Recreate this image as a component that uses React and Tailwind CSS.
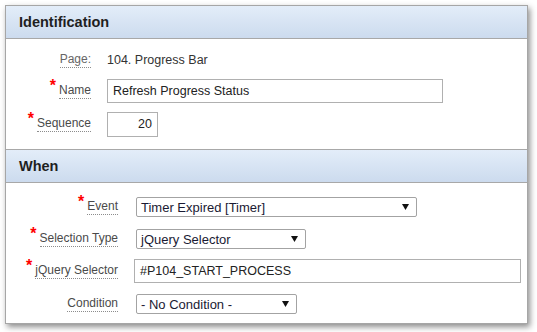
import React from "react";

const font = { fontFamily: '"Liberation Sans", Arial, sans-serif' };

function Req() {
  return (
    <span className="relative top-[-5px] mr-[3px] text-[16px] font-bold leading-none text-[#ff0000]">*</span>
  );
}

function Label({ children, req, light }) {
  return (
    <div className="flex items-center justify-end">
      {req && <Req />}
      <span
        className={
          "border-b border-dotted border-[#8c8c8c] pb-[1px] text-[12px] leading-[14px] " +
          (light ? "text-[#666666]" : "text-[#4a4a4a]")
        }
      >
        {children}
      </span>
    </div>
  );
}

function Arrow() {
  return (
    <svg width="7" height="6" viewBox="0 0 7 6" className="shrink-0">
      <path d="M0 0 L7 0 L3.5 6 Z" fill="#111" />
    </svg>
  );
}

function Select({ w, children }) {
  return (
    <div
      className={
        "flex h-[20px] items-center justify-between rounded-[2px] border border-[#a3a3a3] bg-white pl-[4px] pr-[7px] text-[13px] text-[#1a1a33] " +
        w
      }
    >
      <span className="leading-none">{children}</span>
      <Arrow />
    </div>
  );
}

function Header({ children }) {
  return (
    <div className="flex h-[33px] items-center border-b border-[#a8a8a8] bg-linear-to-b from-[#e3edf9] to-[#ccdbee] pl-[13px] pt-[2px] text-[14.5px] font-bold text-[#1f1f1f]">
      {children}
    </div>
  );
}

export default function App() {
  return (
    <div className="h-[332px] w-[537px] bg-white pl-[5px] pt-[5px]" style={font}>
      <div className="w-[523px] border border-[#a6a6a6] bg-white shadow-[2px_3px_6px_rgba(0,0,0,0.45)]">
        <Header>Identification</Header>
        <div className="flex flex-col border-b border-[#a8a8a8] pb-[13px] pt-[9px]">
          <div className="flex h-[24px] items-center">
            <div className="w-[85px]">
              <Label light>Page:</Label>
            </div>
            <div className="ml-[16px] text-[12.5px] text-[#333333]">104. Progress Bar</div>
          </div>
          <div className="mt-[7px] flex h-[24px] items-center">
            <div className="w-[85px]">
              <Label req>Name</Label>
            </div>
            <div className="ml-[16px] flex h-[24px] w-[336px] items-center border border-[#b0b0b0] pl-[5px] text-[12.5px] text-[#222222]">
              Refresh Progress Status
            </div>
          </div>
          <div className="mt-[9px] flex h-[24px] items-center">
            <div className="w-[85px]">
              <Label req>Sequence</Label>
            </div>
            <div className="ml-[16px] flex h-[25px] w-[51px] items-center justify-end border border-[#b0b0b0] pr-[5px] text-[12.5px] text-[#222222]">
              20
            </div>
          </div>
        </div>
        <Header>When</Header>
        <div className="flex flex-col pb-[7px] pt-[12px]">
          <div className="flex h-[24px] items-center">
            <div className="w-[112px]">
              <Label req>Event</Label>
            </div>
            <div className="ml-[18px]">
              <Select w="w-[281px]">Timer Expired [Timer]</Select>
            </div>
          </div>
          <div className="mt-[8px] flex h-[24px] items-center">
            <div className="w-[112px]">
              <Label req>Selection Type</Label>
            </div>
            <div className="ml-[18px]">
              <Select w="w-[170px]">jQuery Selector</Select>
            </div>
          </div>
          <div className="mt-[8px] flex h-[24px] items-center">
            <div className="w-[112px]">
              <Label req>jQuery Selector</Label>
            </div>
            <div className="ml-[16px] flex h-[24px] w-[387px] items-center border border-[#b0b0b0] pl-[5px] text-[12.5px] text-[#222222]">
              #P104_START_PROCESS
            </div>
          </div>
          <div className="mt-[9px] flex h-[24px] items-center">
            <div className="w-[112px]">
              <Label>Condition</Label>
            </div>
            <div className="ml-[18px]">
              <Select w="w-[161px]">- No Condition -</Select>
            </div>
          </div>
        </div>
      </div>
    </div>
  );
}
